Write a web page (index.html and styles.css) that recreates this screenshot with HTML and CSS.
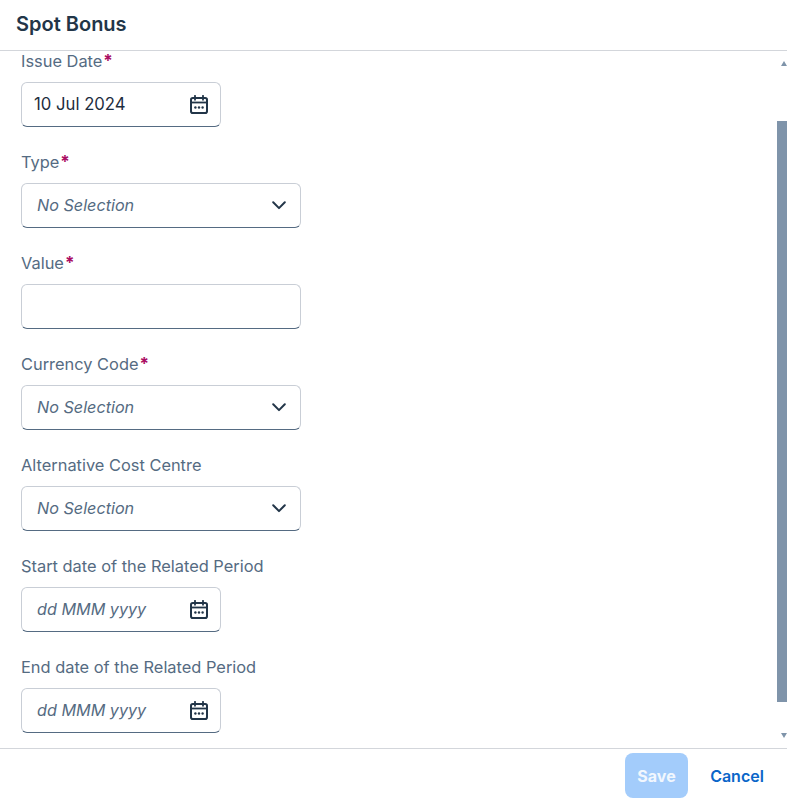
FILE: index.html
```html
<!DOCTYPE html>
<html lang="en">
<head>
<meta charset="utf-8">
<title>Spot Bonus</title>
<link rel="stylesheet" href="styles.css">
</head>
<body>
<svg class="sprite" width="0" height="0" aria-hidden="true">
  <symbol id="cal" viewBox="0 0 18 19">
    <path d="M2.800 3h12.400A1.800 1.800 0 0 1 17 4.800v11.400a1.800 1.800 0 0 1-1.800 1.800H2.800A1.800 1.800 0 0 1 1 16.200V4.800A1.800 1.800 0 0 1 2.800 3Z" fill="none" stroke="currentColor" stroke-width="2"/>
    <path d="M1 7.500h16" fill="none" stroke="currentColor" stroke-width="1.800"/>
    <path d="M5 .8v4M13 .8v4" fill="none" stroke="currentColor" stroke-width="1.800" stroke-linecap="round"/>
    <circle cx="5.400" cy="12.500" r="1.200" fill="currentColor"/><circle cx="9" cy="12.500" r="1.200" fill="currentColor"/><circle cx="12.600" cy="12.500" r="1.200" fill="currentColor"/>
  </symbol>
  <symbol id="chev" viewBox="0 0 14 9">
    <path d="M1.200 1.300 7 7.100l5.800-5.800" fill="none" stroke="currentColor" stroke-width="2" stroke-linecap="round" stroke-linejoin="round"/>
  </symbol>
</svg>
<div class="dialog">
  <header class="head"><h1 class="title">Spot Bonus</h1></header>
  <main class="main">
    <form class="form">
      <div class="field">
        <label class="label">Issue Date<span class="req">*</span></label>
        <div class="input date"><span class="value">10 Jul 2024</span><svg class="cal"><use href="#cal"/></svg></div>
      </div>
      <div class="field">
        <label class="label">Type<span class="req">*</span></label>
        <div class="input select"><span class="ph">No Selection</span><svg class="chev"><use href="#chev"/></svg></div>
      </div>
      <div class="field">
        <label class="label">Value<span class="req">*</span></label>
        <div class="input select"></div>
      </div>
      <div class="field">
        <label class="label">Currency Code<span class="req">*</span></label>
        <div class="input select"><span class="ph">No Selection</span><svg class="chev"><use href="#chev"/></svg></div>
      </div>
      <div class="field">
        <label class="label">Alternative Cost Centre</label>
        <div class="input select"><span class="ph">No Selection</span><svg class="chev"><use href="#chev"/></svg></div>
      </div>
      <div class="field">
        <label class="label">Start date of the Related Period</label>
        <div class="input date"><span class="ph">dd MMM yyyy</span><svg class="cal"><use href="#cal"/></svg></div>
      </div>
      <div class="field">
        <label class="label">End date of the Related Period</label>
        <div class="input date"><span class="ph">dd MMM yyyy</span><svg class="cal"><use href="#cal"/></svg></div>
      </div>
    </form>
    <div class="scrollbar">
      <span class="arrow up"></span>
      <span class="thumb"></span>
      <span class="arrow down"></span>
    </div>
  </main>
  <footer class="foot">
    <button class="btn save" type="button">Save</button>
    <button class="btn cancel" type="button">Cancel</button>
  </footer>
</div>
</body>
</html>
```
FILE: styles.css
```css
* { box-sizing: border-box; }
html, body { margin: 0; height: 100%; background: #fff; }
body { font-family: Inter, "Liberation Sans", sans-serif; overflow: hidden; }
.sprite { position: absolute; }
.dialog { width: 787px; height: 800px; display: flex; flex-direction: column; }
.head { height: 51px; flex: none; display: flex; align-items: center; padding: 0 0 2px 16px; border-bottom: 1px solid #d3d6db; }
.title { margin: 0; font-size: 20px; font-weight: 600; color: #223548; line-height: 24px; }
.main { flex: 1; min-height: 0; display: flex; justify-content: space-between; overflow: hidden; }
.form { display: flex; flex-direction: column; gap: 25px; padding: 0 0 0 21px; }
.field { display: flex; flex-direction: column; gap: 10px; }
.label { display: block; font-size: 16.400px; line-height: 21px; color: #556b82; }
.req { color: #aa0d63; font-weight: 700; margin-left: 1px; font-size: 17px; }
.input { height: 45px; background: #fff; border: 1px solid #c9ced6; border-bottom-color: #556b82; border-radius: 6px; display: flex; align-items: center; justify-content: space-between; font-size: 16.200px; }
.date { width: 200px; padding: 0 12px 1px 12px; }
.select { width: 280px; padding: 0 14px 1px 15px; }
.date .ph { margin-left: 3px; }
.value { color: #1d2d3e; font-size: 16.700px; }
.ph { color: #556b82; font-style: italic; }
.cal { width: 18px; height: 19px; color: #223548; }
.chev { width: 14px; height: 9px; color: #223548; }
.scrollbar { width: 10px; flex: none; display: flex; flex-direction: column; align-items: flex-end; padding-top: 10px; }
.arrow { width: 0; height: 0; border-left: 3.500px solid transparent; border-right: 3.500px solid transparent; margin-right: 0; }
.arrow.up { border-bottom: 5px solid #7f94aa; }
.arrow.down { border-top: 5px solid #7f94aa; margin-top: 31px; }
.thumb { width: 10px; height: 581px; background: #7f94aa; margin-top: 55px; }
.foot { height: 52px; flex: none; border-top: 1px solid #d3d6db; display: flex; justify-content: flex-end; align-items: flex-start; padding: 4px 0 0 0; }
.btn { font-family: inherit; font-size: 16px; font-weight: 600; height: 45px; border: 0; border-radius: 8px; background: none; }
.save { width: 63px; background: #a3ccfb; color: #f1f7fe; font-weight: 700; }
.cancel { width: 99px; color: #0a66c9; padding: 0 23px 0 22px; white-space: nowrap; }
```
